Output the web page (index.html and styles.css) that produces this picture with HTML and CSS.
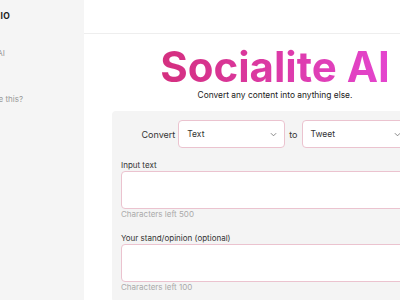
FILE: index.html
```html
<!DOCTYPE html>
<html>
<head>
<meta charset="utf-8">
<link rel="stylesheet" href="styles.css">
</head>
<body>
<div class="app">
  <aside class="sidebar">
    <div class="side-inner">
      <div class="brand">SOCIALITE.IO</div>
      <div class="nav-item first">Socialite AI</div>
      <div class="nav-item q">Why use this?</div>
    </div>
  </aside>
  <main class="main">
    <header class="topbar"></header>
    <section class="content">
      <h1 class="title">Socialite AI</h1>
      <p class="subtitle">Convert any content into anything else.</p>
      <div class="card">
        <div class="convert-row">
          <span class="convert-label">Convert</span>
          <div class="select"><span>Text</span><svg class="chev" viewBox="0 0 8 5" width="7" height="5"><path d="M1 1l3 3 3-3" fill="none" stroke="#777" stroke-width="1"/></svg></div>
          <span class="to">to</span>
          <div class="select"><span>Tweet</span><svg class="chev" viewBox="0 0 8 5" width="7" height="5"><path d="M1 1l3 3 3-3" fill="none" stroke="#777" stroke-width="1"/></svg></div>
        </div>
        <div class="field">
          <label class="field-label">Input text</label>
          <div class="textarea"></div>
          <div class="hint">Characters left 500</div>
        </div>
        <div class="field">
          <label class="field-label">Your stand/opinion (optional)</label>
          <div class="textarea"></div>
          <div class="hint">Characters left 100</div>
        </div>
      </div>
    </section>
  </main>
</div>
</body>
</html>
```
FILE: styles.css
```css
* { box-sizing: border-box; }
html, body { margin: 0; padding: 0; }
body {
  font-family: Inter, "Noto Sans", sans-serif;
  background: #ffffff;
  color: #222;
  width: 400px;
  height: 300px;
  overflow: hidden;
}
.app { display: flex; height: 300px; }
.sidebar {
  width: 84px;
  flex: none;
  background: #f5f5f5;
  overflow: hidden;
}
.side-inner {
  padding-top: 11px;
  white-space: nowrap;
  display: flex;
  flex-direction: column;
}
.brand, .nav-item {
  width: 200px;
  text-align: right;
  line-height: 10px;
  height: 10px;
}
.brand { font-size: 8.5px; font-weight: 700; color: #222; letter-spacing: 0.3px; margin-left: -190px; }
.nav-item { font-size: 8px; color: #999; }
.nav-item.first { margin-top: 27px; margin-left: -195px; }
.nav-item.q { margin-top: 36px; margin-left: -177px; }
.main { flex: 1; min-width: 0; display: flex; flex-direction: column; }
.topbar { height: 34px; border-bottom: 1px solid #eeeeee; flex: none; }
.content {
  width: 326px;
  margin-left: 28px;
  flex: none;
  display: flex;
  flex-direction: column;
  align-items: center;
}
.title {
  margin: 12px 0 0;
  font-size: 42px;
  font-weight: 700;
  line-height: 42px;
  background: linear-gradient(to right, #d42f7e, #e445cf);
  -webkit-background-clip: text;
  background-clip: text;
  color: transparent;
}
.subtitle {
  margin: 2px 0 0;
  font-size: 8.4px;
  line-height: 10px;
  color: #222;
}
.card {
  align-self: stretch;
  margin-top: 11px;
  background: #f4f4f4;
  border-radius: 4px;
  padding: 9px 9px 10px;
  display: flex;
  flex-direction: column;
}
.convert-row {
  display: flex;
  align-items: center;
  justify-content: center;
}
.convert-label { font-size: 9px; color: #333; margin-right: 3px; }
.to { font-size: 9px; color: #333; margin: 0 4px; }
.select {
  width: 107px;
  height: 28px;
  background: #fff;
  border: 1px solid #ebc3cf;
  border-radius: 4px;
  display: flex;
  align-items: center;
  justify-content: space-between;
  padding: 0 7px 0 8px;
  font-size: 8.5px;
  color: #333;
}
.chev { display: block; }
.field { display: flex; flex-direction: column; margin-top: 12px; }
.field + .field { margin-top: 14px; }
.field-label { font-size: 8px; color: #333; line-height: 10px; }
.textarea {
  margin-top: 1px;
  height: 38px;
  background: #fff;
  border: 1px solid #ebc3cf;
  border-radius: 4px;
}
.hint { font-size: 8px; color: #aaa; margin-top: 0; line-height: 10px; }
```
